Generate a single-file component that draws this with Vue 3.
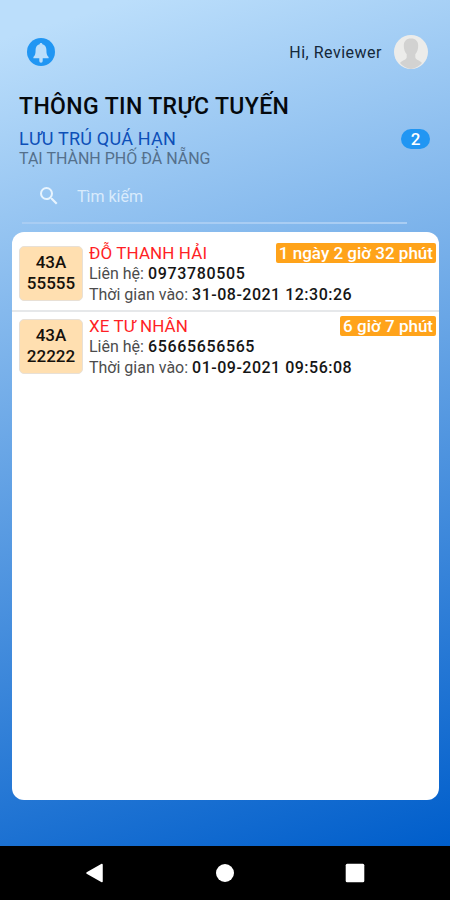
<script setup>
import { ref, computed } from "vue";

const keyword = ref("");

const vehicles = ref([
  {
    plate: ["43A", "55555"],
    owner: "ĐỖ THANH HẢI",
    phone: "0973780505",
    timeIn: "31-08-2021 12:30:26",
    overdue: "1 ngày 2 giờ 32 phút",
  },
  {
    plate: ["43A", "22222"],
    owner: "XE TƯ NHÂN",
    phone: "65665656565",
    timeIn: "01-09-2021 09:56:08",
    overdue: "6 giờ 7 phút",
  },
]);

const filtered = computed(() => {
  const key = keyword.value.trim().toLowerCase();
  if (!key) return vehicles.value;
  return vehicles.value.filter((v) =>
    [v.plate.join(""), v.owner, v.phone].join(" ").toLowerCase().includes(key)
  );
});
</script>

<template>
  <div class="screen">
    <main class="content">
      <!-- TOP BAR -->
      <header class="top-bar">
        <button class="bell">
          <svg viewBox="0 0 28 28" width="28" height="28">
            <circle cx="14" cy="14" r="14" fill="#2196f3" />
            <path
              d="M14 5c.8 0 1.300.5 1.400 1.200 2.700.7 4 2.900 4 5.600 0 3.600.4 5.700 2.200 7.200v1.200H6.400V19c1.800-1.500 2.200-3.600 2.200-7.200 0-2.700 1.300-4.900 4-5.600.1-.7.6-1.200 1.400-1.200z"
              fill="#bbdefb"
            />
            <path d="M12.300 20v3a1.700 1.700 0 0 0 3.400 0v-3z" fill="#bbdefb" />
          </svg>
        </button>
        <div class="user">
          <span class="hello">Hi, Reviewer</span>
          <svg class="avatar" viewBox="0 0 34 34" width="34" height="34">
            <circle cx="17" cy="17" r="17" fill="#ececea" />
            <path
              d="M17 3.500c4.600 0 7.200 2.700 7.200 7 0 3.500-1 6.700-2.900 8.700v3.100c0 2.400 4.300 3 6.700 5.700A17 17 0 0 1 17 34 17 17 0 0 1 6 28c2.400-2.700 6.700-3.300 6.700-5.700v-3.100c-1.900-2-2.900-5.200-2.900-8.700 0-4.300 2.600-7 7.200-7z"
              fill="#d2d2d1"
            />
          </svg>
        </div>
      </header>

      <h1 class="title">THÔNG TIN TRỰC TUYẾN</h1>

      <div class="summary">
        <div>
          <h2 class="subtitle">LƯU TRÚ QUÁ HẠN</h2>
          <p class="place">TẠI THÀNH PHỐ ĐÀ NẴNG</p>
        </div>
        <span class="count">{{ vehicles.length }}</span>
      </div>

      <!-- SEARCH -->
      <label class="search">
        <svg viewBox="0 0 24 24" width="24" height="24">
          <path
            d="M15.500 14h-.79l-.28-.27A6.471 6.471 0 0 0 16 9.500 6.500 6.500 0 1 0 9.500 16c1.610 0 3.090-.59 4.230-1.570l.27.28v.79l5 4.990L20.490 19l-4.990-5zm-6 0C7.010 14 5 11.990 5 9.500S7.010 5 9.500 5 14 7.010 14 9.500 11.990 14 9.500 14z"
            fill="#e8f4fe"
          />
        </svg>
        <input v-model="keyword" type="text" placeholder="Tìm kiếm" />
      </label>

      <!-- VEHICLE LIST -->
      <section class="list">
        <article v-for="item in filtered" :key="item.phone" class="row">
          <div class="plate">
            <span v-for="part in item.plate" :key="part">{{ part }}</span>
          </div>
          <div class="info">
            <div class="row-head">
              <span class="owner">{{ item.owner }}</span>
              <span class="overdue">{{ item.overdue }}</span>
            </div>
            <p>Liên hệ: <b class="phone">{{ item.phone }}</b></p>
            <p>Thời gian vào: <b>{{ item.timeIn }}</b></p>
          </div>
        </article>
      </section>
    </main>

    <!-- SYSTEM NAVIGATION -->
    <nav class="nav-bar">
      <svg viewBox="0 0 20 20" width="20" height="20">
        <path d="M2 10 17 1.500v17z" fill="#fff" stroke="#fff" stroke-width="1.500" stroke-linejoin="round" />
      </svg>
      <svg viewBox="0 0 20 20" width="20" height="20">
        <circle cx="10" cy="10" r="9" fill="#fff" />
      </svg>
      <svg viewBox="0 0 20 20" width="20" height="20">
        <rect x=".7" y=".7" width="18.600" height="18.600" rx="1.500" fill="#fff" />
      </svg>
    </nav>
  </div>
</template>

<style>
body {
  margin: 0;
  background: #000;
}
</style>

<style scoped>
.screen {
  width: 450px;
  height: 900px;
  display: flex;
  flex-direction: column;
  font-family: Roboto, "Noto Sans", sans-serif;
  overflow: hidden;
}
.content {
  flex: 1;
  min-height: 0;
  box-sizing: border-box;
  display: flex;
  flex-direction: column;
  padding: 34px 11px 46px 12px;
  background: linear-gradient(163deg, #bbdefb 4%, #005ecb 100%);
}
h1, h2, p {
  margin: 0;
}

/* TOP BAR */
.top-bar {
  display: flex;
  align-items: center;
  justify-content: space-between;
  height: 36px;
  padding: 0 0 0 15px;
}
.bell {
  display: flex;
  padding: 0;
  border: none;
  background: none;
}
.user {
  display: flex;
  align-items: center;
  gap: 12px;
  margin-right: 11px;
}
.hello {
  font-size: 16px;
  letter-spacing: 0.5px;
  color: #14283a;
}
.avatar {
  display: block;
}

.title {
  margin: 23px 0 0 7px;
  font-size: 23px;
  line-height: 28px;
  font-weight: 500;
  letter-spacing: 0.38px;
  color: #05090d;
}
.summary {
  display: flex;
  justify-content: space-between;
  align-items: flex-start;
  margin: 8px 9px 0 7px;
}
.subtitle {
  font-size: 18px;
  line-height: 20px;
  font-weight: 400;
  letter-spacing: 0.23px;
  color: #0d4fb8;
}
.place {
  font-size: 16px;
  line-height: 20px;
  color: #54708c;
}
.count {
  width: 29px;
  height: 20px;
  border-radius: 10px;
  background: #2196f3;
  color: #fff;
  font-size: 17px;
  line-height: 20px;
  font-weight: 500;
  text-align: center;
}

/* SEARCH */
.search {
  display: flex;
  align-items: center;
  gap: 16px;
  height: 55px;
  box-sizing: border-box;
  margin: 0 32px 0 10px;
  padding-left: 15px;
  border-bottom: 2px solid #a9cdf3;
}
.search input {
  flex: 1;
  padding: 2px 0 0;
  border: none;
  outline: none;
  background: none;
  font: 400 16px Roboto, "Noto Sans", sans-serif;
  color: #fff;
}
.search input::placeholder {
  color: #d9ebfc;
  opacity: 1;
}

/* LIST */
.list {
  flex: 1;
  min-height: 0;
  margin-top: 8px;
  border-radius: 12px;
  background: #fff;
  overflow: hidden;
}
.row {
  display: flex;
  gap: 6px;
  height: 73px;
  padding: 7px 3px 0 7px;
  box-sizing: border-box;
}
.row:first-child {
  height: 80px;
  padding-top: 14px;
  border-bottom: 2px solid #e6e8ea;
}
.plate {
  display: flex;
  flex-direction: column;
  align-items: center;
  justify-content: center;
  width: 64px;
  height: 55px;
  padding-bottom: 2px;
  box-sizing: border-box;
  flex-shrink: 0;
  border: 1px solid #e8e0d6;
  border-radius: 5px;
  background: #ffdfb0;
  color: #15110b;
  font-size: 17px;
  line-height: 21px;
  font-weight: 500;
}
.info {
  flex: 1;
  min-width: 0;
  margin-top: -3px;
  font-size: 16px;
  line-height: 21px;
  color: #4c4c4c;
  white-space: nowrap;
}
.row-head {
  display: flex;
  align-items: center;
  justify-content: space-between;
  height: 20px;
}
.owner {
  font-size: 17px;
  letter-spacing: 0.1px;
  color: #ff1f26;
}
.overdue {
  padding: 0 3px;
  border-radius: 2px;
  background: #ffa31a;
  color: #fff;
  font-size: 17px;
  line-height: 20px;
  font-weight: 500;
}
.info b {
  font-weight: 500;
  letter-spacing: 0.5px;
  color: #151515;
}
.info .phone {
  letter-spacing: 0.65px;
}

/* NAVIGATION */
.nav-bar {
  display: flex;
  align-items: center;
  justify-content: space-between;
  height: 54px;
  box-sizing: border-box;
  padding: 0 85px;
  background: #000;
}
</style>
